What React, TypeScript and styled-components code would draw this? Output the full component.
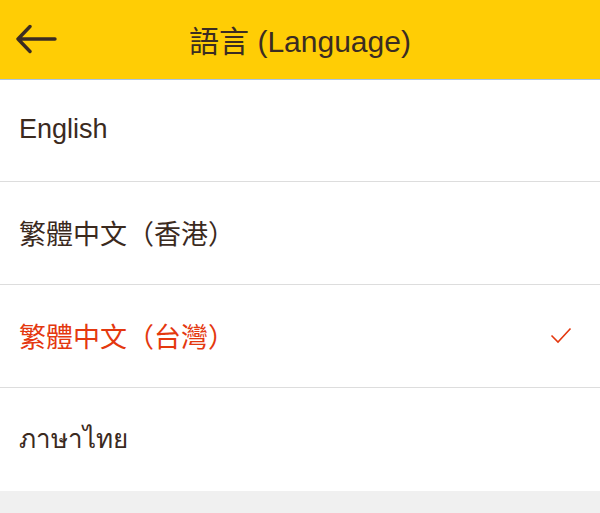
import styled, { createGlobalStyle } from "styled-components";

const GlobalStyle = createGlobalStyle`
  html, body {
    margin: 0;
    padding: 0;
    background: #f0f0f0;
  }
  body {
    font-family: "Liberation Sans", "Noto Sans CJK TC", "Noto Sans", sans-serif;
  }
`;

const Page = styled.div`
  width: 600px;
  height: 513px;
  background: #f0f0f0;
  overflow: hidden;
`;

const Header = styled.header`
  height: 79px;
  background: #ffcd05;
  border-bottom: 1px solid #a8c4e6;
  display: grid;
  grid-template-columns: 80px 1fr 80px;
  align-items: center;
`;

const BackButton = styled.button`
  border: none;
  background: none;
  padding: 0 0 0 16px;
  height: 100%;
  display: flex;
  align-items: center;
  cursor: pointer;
`;

const Title = styled.h1`
  margin: 0;
  text-align: center;
  font-size: 30px;
  font-weight: 400;
  color: #3b2c22;
  padding-bottom: 2px;
`;

const List = styled.ul`
  list-style: none;
  margin: 0;
  padding: 0;
  background: #fff;
`;

const Row = styled.li<{ $active?: boolean }>`
  height: 103px;
  box-sizing: border-box;
  border-bottom: 1px solid #dddddd;
  display: flex;
  align-items: center;
  justify-content: space-between;
  padding: 0 28px 0 19px;
  color: ${(p) => (p.$active ? "#e4380f" : "#3b2a1e")};
  &:first-child {
    height: 102px;
  }
  &:last-child {
    border-bottom: none;
    height: 103px;
  }
`;

const Label = styled.span<{ $kind: "latin" | "cjk" | "thai" }>`
  font-family: ${(p) =>
    p.$kind === "latin"
      ? `"Liberation Sans", sans-serif`
      : `"Noto Sans CJK TC", "DejaVu Sans", sans-serif`};
  font-size: ${(p) => (p.$kind === "thai" ? "26px" : "27px")};
  padding-bottom: 2px;
  white-space: nowrap;
`;

const Paren = styled.span<{ $side: "open" | "close" }>`
  display: inline-block;
  width: 1em;
  text-align: ${(p) => (p.$side === "open" ? "right" : "left")};
`;

type Lang = {
  name: string;
  region?: string;
  kind: "latin" | "cjk" | "thai";
  active?: boolean;
};

const languages: Lang[] = [
  { name: "English", kind: "latin" },
  { name: "繁體中文", region: "香港", kind: "cjk" },
  { name: "繁體中文", region: "台灣", kind: "cjk", active: true },
  { name: "ภาษาไทย", kind: "thai" },
];

export default function App() {
  return (
    <Page>
      <GlobalStyle />
      <Header>
        <BackButton aria-label="back">
          <svg width="42" height="32" viewBox="0 0 42 32" fill="none">
            <path
              d="M2 15 H39 M14 2.5 L2 15 L14 27.5"
              stroke="#3b2c22"
              strokeWidth="3.4"
              strokeLinecap="round"
              strokeLinejoin="round"
            />
          </svg>
        </BackButton>
        <Title>語言 (Language)</Title>
        <div />
      </Header>
      <List>
        {languages.map((l) => (
          <Row key={l.name + (l.region ?? "")} $active={l.active}>
            <Label $kind={l.kind}>
              {l.name}
              {l.region && (
                <>
                  <Paren $side="open">（</Paren>
                  {l.region}
                  <Paren $side="close">）</Paren>
                </>
              )}
            </Label>
            {l.active && (
              <svg width="22" height="18" viewBox="0 0 22 18" fill="none">
                <path
                  d="M1.5 8.5 L8 15 L20.5 1.5"
                  stroke="#e4380f"
                  strokeWidth="1.6"
                />
              </svg>
            )}
          </Row>
        ))}
      </List>
    </Page>
  );
}
